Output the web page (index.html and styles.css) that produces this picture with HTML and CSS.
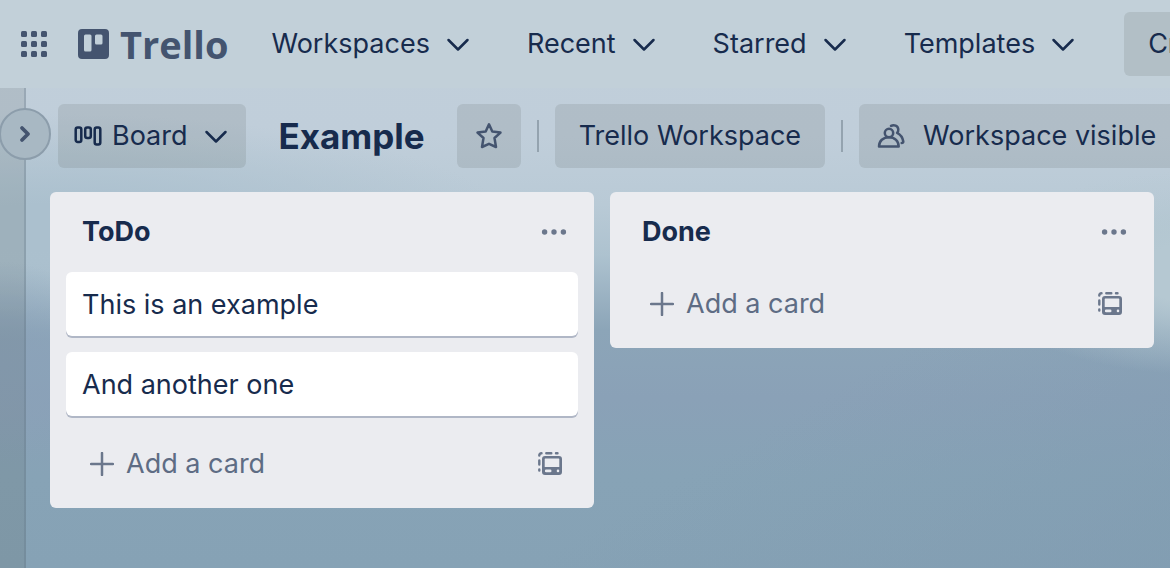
FILE: index.html
```
<!DOCTYPE html>
<html lang="en">
<head>
<meta charset="utf-8">
<title>Example | Trello</title>
<link rel="stylesheet" href="styles.css">
</head>
<body>
<svg class="defs" aria-hidden="true">
  <symbol id="chevron" viewBox="0 0 24 16"><path d="M2.500 4 12 13.500 21.500 4" fill="none" stroke="currentColor" stroke-width="2.500" stroke-linecap="round" stroke-linejoin="round"/></symbol>
  <symbol id="dots" viewBox="0 0 32 32"><g fill="currentColor"><circle cx="6.600" cy="16" r="2.700"/><circle cx="16" cy="16" r="2.700"/><circle cx="25.400" cy="16" r="2.700"/></g></symbol>
  <symbol id="plus" viewBox="0 0 24 24"><path d="M12 1v22M1 12h22" fill="none" stroke="currentColor" stroke-width="2.500" stroke-linecap="round"/></symbol>
  <symbol id="template" viewBox="0 0 24 24">
    <path d="M1.300 3.500V3.300a2 2 0 0 1 2-2H3.500M8.300 1.300h5M18 1.300h1.500M1.300 8.500v4M1.300 17.500v1" fill="none" stroke="currentColor" stroke-width="2.400" stroke-linecap="round"/>
    <path fill="currentColor" fill-rule="evenodd" d="M7 4h14a3 3 0 0 1 3 3v13a3 3 0 0 1-3 3H7a3 3 0 0 1-3-3V7a3 3 0 0 1 3-3Zm.3 2.600a.6.600 0 0 0-.6.600v7.800h14.600V7.200a.6.600 0 0 0-.6-.6ZM8.200 17.600a1.300 1.300 0 0 0 0 2.600h4a1.300 1.300 0 0 0 0-2.600Zm11.800 0a1.300 1.300 0 1 0 0 2.600 1.300 1.300 0 0 0 0-2.600Z"/>
  </symbol>
</svg>

<header class="header">
  <button class="switcher" aria-label="Switch apps">
    <svg width="26" height="26" viewBox="0 0 26 26" fill="currentColor"><rect width="6" height="6" rx="1.500"/><rect x="10" width="6" height="6" rx="1.500"/><rect x="20" width="6" height="6" rx="1.500"/><rect y="10" width="6" height="6" rx="1.500"/><rect x="10" y="10" width="6" height="6" rx="1.500"/><rect x="20" y="10" width="6" height="6" rx="1.500"/><rect y="20" width="6" height="6" rx="1.500"/><rect x="10" y="20" width="6" height="6" rx="1.500"/><rect x="20" y="20" width="6" height="6" rx="1.500"/></svg>
  </button>
  <a class="logo" href="#">
    <svg width="31" height="30" viewBox="0 0 31 30" aria-hidden="true"><path fill="currentColor" fill-rule="evenodd" d="M4 0h23a4 4 0 0 1 4 4v22a4 4 0 0 1-4 4H4a4 4 0 0 1-4-4V4a4 4 0 0 1 4-4Zm3.500 5.500A1.500 1.500 0 0 0 6 7v14a1.500 1.500 0 0 0 1.500 1.500h4.500a1.500 1.500 0 0 0 1.500-1.500V7A1.500 1.500 0 0 0 12 5.500Zm11 0A1.500 1.500 0 0 0 17 7v7a1.500 1.500 0 0 0 1.500 1.500H23a1.500 1.500 0 0 0 1.500-1.500V7A1.500 1.500 0 0 0 23 5.500Z"/></svg>
    <span>Trello</span>
  </a>
  <nav class="nav">
    <button class="nav-item">Workspaces <svg class="chevron"><use href="#chevron"/></svg></button>
    <button class="nav-item">Recent <svg class="chevron"><use href="#chevron"/></svg></button>
    <button class="nav-item">Starred <svg class="chevron"><use href="#chevron"/></svg></button>
    <button class="nav-item">Templates <svg class="chevron"><use href="#chevron"/></svg></button>
  </nav>
  <button class="button create">Create</button>
</header>

<div class="workspace">
  <aside class="sidebar">
    <button class="expand" aria-label="Expand sidebar">
      <svg width="12" height="18" viewBox="0 0 12 18"><path d="M3 3l6 6-6 6" fill="none" stroke="currentColor" stroke-width="3.800" stroke-linecap="round" stroke-linejoin="round"/></svg>
    </button>
  </aside>
  <main class="board">
    <div class="board-bar">
      <button class="button view">
        <svg width="28" height="20" viewBox="0 0 28 20" fill="none" stroke="currentColor" stroke-width="2.500"><rect x="1.700" y="1.500" width="5.600" height="14.500" rx="2"/><rect x="11.200" y="1.500" width="5.600" height="10.600" rx="2"/><rect x="20.700" y="1.500" width="5.600" height="17" rx="2"/></svg>
        Board
        <svg class="chevron"><use href="#chevron"/></svg>
      </button>
      <h1 class="title">Example</h1>
      <button class="button star" aria-label="Star board">
        <svg width="28" height="28" viewBox="0 0 28 28"><path d="M14 2.300l3.300 7.300 8.200 1-6 5.400 1.500 9-7-3.200L7 25l1.500-9-6-5.400 8.200-1Z" fill="none" stroke="currentColor" stroke-width="2.500" stroke-linejoin="round"/></svg>
      </button>
      <span class="divider"></span>
      <button class="button">Trello Workspace</button>
      <span class="divider"></span>
      <button class="button visibility">
        <svg width="28" height="26" viewBox="0 0 28 26" fill="none" stroke="currentColor" stroke-width="2.500" stroke-linejoin="round" stroke-linecap="round"><circle cx="12" cy="10" r="4.200"/><path d="M2 23.500c0-5.500 4.200-9.300 10-9.300s9.700 3.800 9.700 9.300Z"/><path d="M14 2.900c3-1.700 7-.2 7.300 3.400.1 1.500-.3 2.600-1.200 3.600 3.200 1.600 5.500 4.600 6.200 8.600.1.900-.5 1.500-1.600 1.500"/></svg>
        Workspace visible
      </button>
    </div>
    <div class="lists">
      <section class="list">
        <header class="list-header"><h2>ToDo</h2><button class="icon-button" aria-label="List actions"><svg width="32" height="32"><use href="#dots"/></svg></button></header>
        <a class="card" href="#">This is an example</a>
        <a class="card" href="#">And another one</a>
        <footer class="list-footer"><button class="add"><svg width="24" height="24"><use href="#plus"/></svg>Add a card</button><button class="icon-button" aria-label="Create from template"><svg width="24" height="24"><use href="#template"/></svg></button></footer>
      </section>
      <section class="list">
        <header class="list-header"><h2>Done</h2><button class="icon-button" aria-label="List actions"><svg width="32" height="32"><use href="#dots"/></svg></button></header>
        <footer class="list-footer"><button class="add"><svg width="24" height="24"><use href="#plus"/></svg>Add a card</button><button class="icon-button" aria-label="Create from template"><svg width="24" height="24"><use href="#template"/></svg></button></footer>
      </section>
    </div>
  </main>
</div>
</body>
</html>
```
FILE: styles.css
```
* { box-sizing: border-box; }

body {
  display: flex;
  flex-direction: column;
  min-height: 100vh;
  margin: 0;
  overflow: hidden;
  color: #172b4d;
  font: 27px/40px Inter, "Liberation Sans", sans-serif;
  background:
    radial-gradient(ellipse 20% 18% at 103% 48%, #b5c8d2 30%, #b5c8d200 100%),
    radial-gradient(ellipse 10% 18% at 0% 64%, #8ba2b9 0%, #8ba2b900 100%),
    radial-gradient(ellipse 40% 20% at 4% 40%, #abc0ce 20%, #abc0ce00 100%),
    linear-gradient(150deg, #7f9ab000 70%, #7f9ab090 100%),
    linear-gradient(#c1cfda 0%, #c0ceda 24%, #b9cad6 36%, #adc2cf 45%, #8ca5b8 58%, #8aa1b7 70%, #87a3b6 84%, #86a2b5 100%);
}

button { padding: 0; border: 0; background: none; color: inherit; font: inherit; white-space: nowrap; }
a { color: inherit; text-decoration: none; }
svg { display: block; flex: none; }
h1, h2 { margin: 0; }

.defs { position: absolute; width: 0; height: 0; }
.chevron { width: 24px; height: 16px; }

.header {
  display: flex;
  align-items: center;
  padding: 12px 0 12px 21px;
  background: #c2d0d9;
}
.switcher { color: #44546f; }
.logo {
  display: flex;
  align-items: center;
  gap: 11px;
  margin: 0 19px 0 31px;
  color: #44546f;
  font: bold 38px/44px "Open Sans", sans-serif;
}
.nav { display: flex; gap: 9px; }
.nav-item { display: flex; align-items: center; gap: 16px; height: 64px; padding: 0 24px; }

.button {
  display: flex;
  flex: none;
  align-items: center;
  height: 64px;
  padding: 0 24px;
  border-radius: 6px;
  background: #4a4f4a22;
}
.create { margin-left: 25px; }

.workspace { display: flex; flex: 1; }
.sidebar {
  position: relative;
  flex: none;
  width: 26px;
  border-right: 2px solid #5e748748;
  background: #4a4f4a22;
}
.expand {
  position: absolute;
  top: 20px;
  left: -1px;
  display: grid;
  place-items: center;
  width: 52px;
  height: 52px;
  border: 2px solid #8c9dab;
  border-radius: 50%;
  background: #a8b8c3;
  color: #44546f;
}

.board { flex: 1; min-width: 0; padding: 16px 16px 24px 24px; }
.board-bar { display: flex; align-items: center; margin: 0 -16px 24px 8px; overflow: hidden; }
.view { gap: 10px; padding: 0 18px 0 16px; }
.view .chevron { margin-left: 6px; }
.title { margin: 0 32px 0 33px; font-size: 35px; line-height: 48px; }
.star { padding: 0 18px; color: #44546f; }
.divider { flex: none; width: 2px; height: 32px; margin: 0 16px; background: #94a3af; }
.visibility { gap: 18px; padding-left: 18px; }
.visibility svg { color: #44546f; }

.lists { display: flex; align-items: flex-start; gap: 16px; }
.list { flex: 1; min-width: 0; padding: 0 16px 12px; border-radius: 6px; background: #ebecf0; }
.list-header, .list-footer { display: flex; align-items: center; justify-content: space-between; }
.list-header { height: 80px; padding: 0 8px 0 16px; }
.list h2 { font-size: 27px; line-height: 40px; font-weight: 700; }
.card {
  display: block;
  margin-bottom: 16px;
  padding: 13px 16px 11px;
  border-radius: 6px;
  background: #fff;
  box-shadow: 0 2px 0 #b0b7c6;
}
.list-footer { height: 64px; padding: 0 16px 0 24px; }
.add { display: flex; align-items: center; gap: 12px; color: #5e6c84; }
.icon-button, .add svg { color: #6b778c; }
```
